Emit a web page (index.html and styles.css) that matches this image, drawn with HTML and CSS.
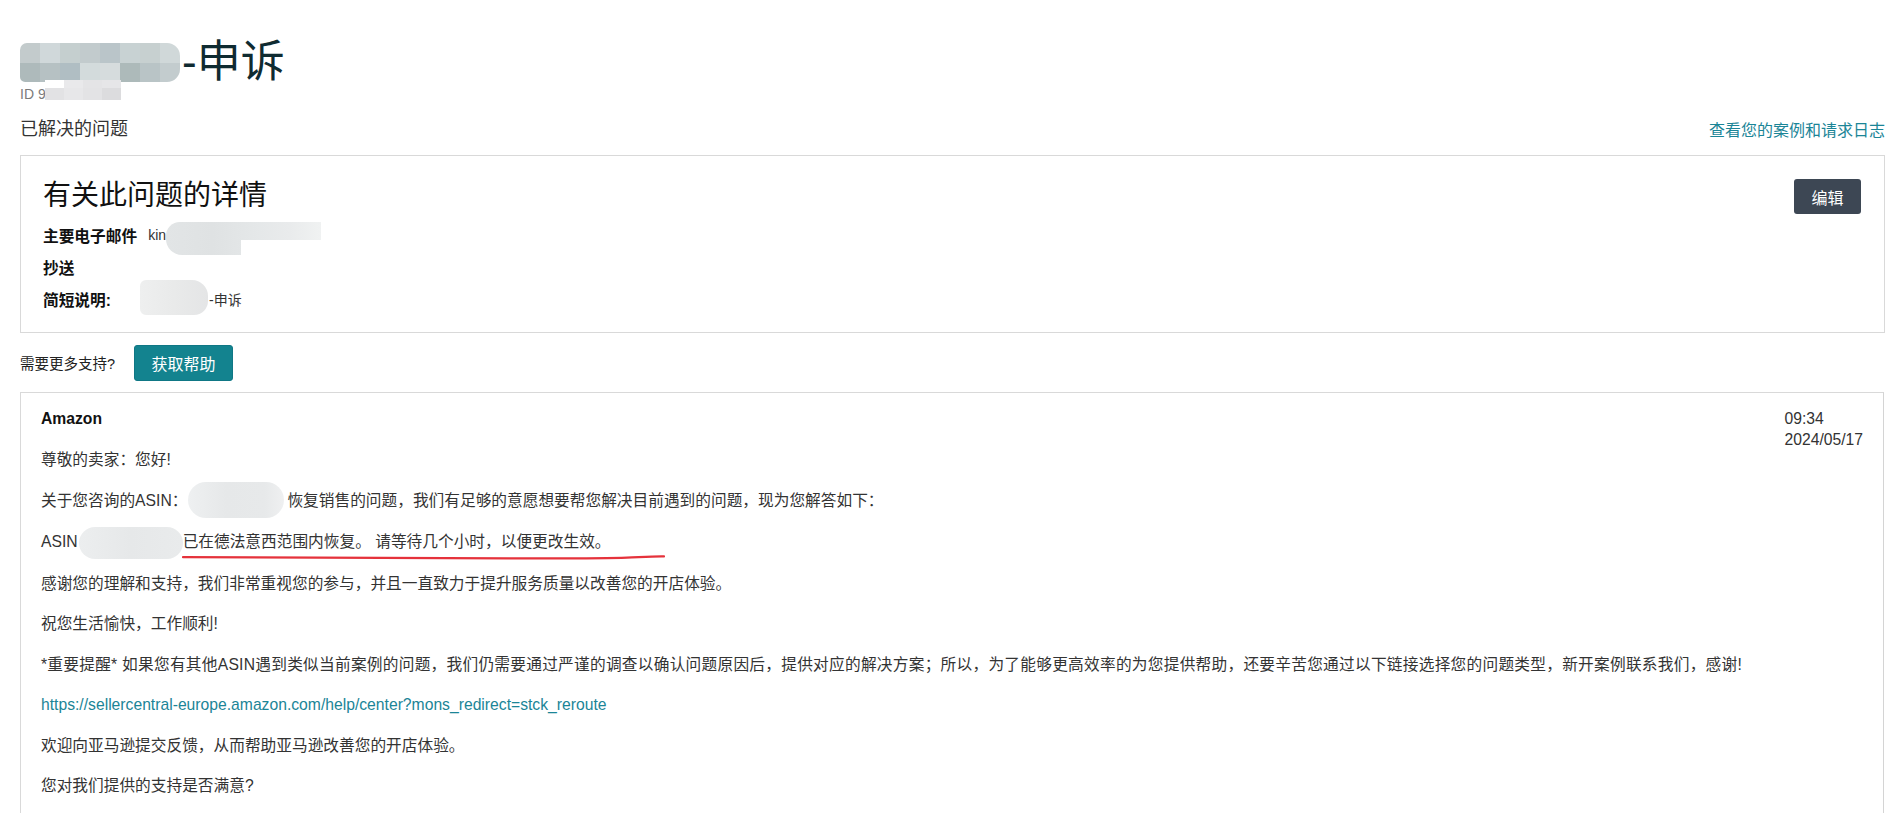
FILE: index.html
```html
<!DOCTYPE html>
<html lang="zh-CN">
<head>
<meta charset="utf-8">
<title>申诉</title>
<link rel="stylesheet" href="styles.css">
</head>
<body>
<div class="page">
  <header class="case-head">
    <h1 class="case-title">
      <span class="pix pix-title"><i></i><i></i><i></i><i></i><i></i><i></i><i></i><i></i><i></i><i></i><i></i><i></i><i></i><i></i><i></i><i></i></span>
      <span class="title-text">-申诉</span>
    </h1>
    <div class="case-id">
      <span>ID 9</span>
      <span class="pix pix-id"><i></i><i></i><i></i><i></i><i></i><i></i><i></i><i></i></span>
    </div>
  </header>

  <div class="status-row">
    <span class="status">已解决的问题</span>
    <a class="log-link" href="#">查看您的案例和请求日志</a>
  </div>

  <section class="details">
    <div class="details-head">
      <h2 class="details-title">有关此问题的详情</h2>
      <button class="edit-btn" type="button">编辑</button>
    </div>
    <div class="details-rows">
      <div class="row">
        <span class="label">主要电子邮件</span>
        <span class="value">kin</span>
        <span class="blur blur-email"></span>
      </div>
      <div class="row">
        <span class="label">抄送</span>
      </div>
      <div class="row">
        <span class="label">简短说明:</span>
        <span class="blur blur-desc"></span>
        <span class="value value-tight">-申诉</span>
      </div>
    </div>
  </section>

  <div class="help-row">
    <span class="help-text">需要更多支持?</span>
    <button class="help-btn" type="button">获取帮助</button>
  </div>

  <section class="message">
    <div class="msg-head">
      <span class="sender">Amazon</span>
      <div class="msg-date">
        <div>09:34</div>
        <div>2024/05/17</div>
      </div>
    </div>
    <p>尊敬的卖家：您好!</p>
    <p>关于您咨询的ASIN：<span class="blur blur-asin1"></span>恢复销售的问题，我们有足够的意愿想要帮您解决目前遇到的问题，现为您解答如下：</p>
    <p class="asin-line">ASIN<span class="blur blur-asin2"></span>已在德法意西范围内恢复。 请等待几个小时，以便更改生效。<svg class="scribble" viewBox="0 0 484 8" width="484" height="8" aria-hidden="true"><path d="M1 4.2 C 80 5.2, 200 5.6, 330 5.4 C 380 5.3, 420 5.6, 445 4.6 C 460 4, 472 3.2, 482 3.4" fill="none" stroke="#e5323b" stroke-width="2.2" stroke-linecap="round"/></svg></p>
    <p>感谢您的理解和支持，我们非常重视您的参与，并且一直致力于提升服务质量以改善您的开店体验。</p>
    <p>祝您生活愉快，工作顺利!</p>
    <p class="notice">*重要提醒* 如果您有其他ASIN遇到类似当前案例的问题，我们仍需要通过严谨的调查以确认问题原因后，提供对应的解决方案；所以，为了能够更高效率的为您提供帮助，还要辛苦您通过以下链接选择您的问题类型，新开案例联系我们，感谢!</p>
    <p><a class="msg-link" href="#">https://sellercentral-europe.amazon.com/help/center?mons_redirect=stck_reroute</a></p>
    <p>欢迎向亚马逊提交反馈，从而帮助亚马逊改善您的开店体验。</p>
    <p>您对我们提供的支持是否满意?</p>
  </section>
</div>
</body>
</html>
```

FILE: styles.css
```css
* { box-sizing: border-box; }

html, body { background: #fff; }

body {
  margin: 0;
  font-family: "Liberation Sans", "Noto Sans CJK SC", sans-serif;
  color: #333;
}

.page {
  padding: 0 12px 0 20px;
}

/* ---------- header ---------- */
.case-title {
  margin: 38px 0 0;
  height: 48px;
  display: flex;
  align-items: center;
  font-size: 44px;
  line-height: 48px;
  font-weight: 400;
  color: #0f2b31;
}

.pix { display: inline-grid; }
.pix i { display: block; }

.pix-title {
  grid-template-columns: repeat(8, 20px);
  grid-template-rows: 20px 19px;
  width: 160px;
  height: 39px;
  border-radius: 7px 13px 13px 5px;
  overflow: hidden;
  margin-right: 2px;
}
.pix-title i:nth-child(1)  { background: #c3cbcc; }
.pix-title i:nth-child(2)  { background: #d0d8da; }
.pix-title i:nth-child(3)  { background: #c5cfcf; }
.pix-title i:nth-child(4)  { background: #c2cbcd; }
.pix-title i:nth-child(5)  { background: #bac5c9; }
.pix-title i:nth-child(6)  { background: #c8d2d3; }
.pix-title i:nth-child(7)  { background: #c7d0d0; }
.pix-title i:nth-child(8)  { background: #d0d8d9; }
.pix-title i:nth-child(9)  { background: #aebabb; }
.pix-title i:nth-child(10) { background: #b6c1c3; }
.pix-title i:nth-child(11) { background: #b0bec3; }
.pix-title i:nth-child(12) { background: #d3dbdc; }
.pix-title i:nth-child(13) { background: #d6dcdd; }
.pix-title i:nth-child(14) { background: #adbaba; }
.pix-title i:nth-child(15) { background: #b9c4c6; }
.pix-title i:nth-child(16) { background: #c3ccce; }

.title-text { white-space: nowrap; }

.case-id {
  display: flex;
  align-items: flex-start;
  font-size: 14px;
  line-height: 16px;
  color: #7a7a7a;
}

.pix-id {
  grid-template-columns: repeat(4, 19px);
  grid-template-rows: 8px 12px;
  width: 76px;
  height: 20px;
  margin-top: -6px;
  margin-left: -1px;
}
.pix-id i:nth-child(1) { background: #ffffff; }
.pix-id i:nth-child(2) { background: #e9e9eb; }
.pix-id i:nth-child(3) { background: #e4e4e6; }
.pix-id i:nth-child(4) { background: #e6e6e8; }
.pix-id i:nth-child(5) { background: #e2e2e4; }
.pix-id i:nth-child(6) { background: #e7e7e9; }
.pix-id i:nth-child(7) { background: #e3e3e5; }
.pix-id i:nth-child(8) { background: #dcdcde; }

/* ---------- status ---------- */
.status-row {
  margin-top: 15px;
  height: 24px;
  display: flex;
  justify-content: space-between;
  align-items: center;
}

.status {
  font-size: 18px;
  line-height: 24px;
  color: #333;
}

.log-link {
  font-size: 16px;
  line-height: 20px;
  margin-top: 3px;
  color: #1b8597;
  text-decoration: none;
}

/* ---------- details card ---------- */
.details {
  margin-top: 14px;
  border: 1px solid #d9d9d9;
  padding: 22px 23px 17px 22px;
}

.details-head {
  display: flex;
  justify-content: space-between;
  align-items: flex-start;
  height: 36px;
}

.details-title {
  margin: 0;
  font-size: 28px;
  line-height: 36px;
  font-weight: 400;
  color: #111;
}

.edit-btn {
  margin-top: 1px;
  width: 67px;
  height: 35px;
  border: 0;
  border-radius: 3px;
  background: #3d4754;
  color: #fff;
  font-family: inherit;
  font-size: 16px;
  padding: 0;
}

.details-rows { margin-top: 5px; }

.row {
  height: 32px;
  display: flex;
  align-items: center;
}

.label {
  font-size: 15.7px;
  font-weight: 700;
  color: #111;
}

.value {
  margin-left: 11px;
  font-size: 14px;
  color: #333;
}

.value-tight { margin-left: 1px; }

.blur { display: inline-block; }

.blur-email {
  width: 155px;
  height: 33px;
  margin-top: 7px;
  border-radius: 14px 0 0 16px;
  background:
    linear-gradient(180deg, rgba(255,255,255,0) 55%, #fff 55%) 75px 0 / 80px 100% no-repeat,
    linear-gradient(90deg, #e2e5e6 0%, #dfe2e3 30%, #e4e7e8 55%, #e9ebec 80%, #f0f2f2 100%);
}

.blur-desc {
  width: 68px;
  height: 35px;
  margin-left: 29px;
  margin-top: -3px;
  border-radius: 6px 16px 14px 6px;
  background: linear-gradient(90deg, #eeefef, #e9eaea 50%, #e4e5e6 100%);
}

/* ---------- help ---------- */
.help-row {
  margin-top: 12px;
  display: flex;
  align-items: center;
  gap: 19px;
}

.help-text {
  font-size: 14.5px;
  color: #222;
  margin-top: -2px;
}

.help-btn {
  width: 99px;
  height: 36px;
  border: 1px solid #0f7785;
  border-radius: 3px;
  background: #13838f;
  color: #fff;
  font-family: inherit;
  font-size: 16px;
  padding: 0;
}

/* ---------- message ---------- */
.message {
  margin-top: 11px;
  border: 1px solid #d9d9d9;
  border-right-color: #d4d4d4;
  border-bottom: 0;
  margin-right: 1px;
  padding: 16px 20px 10px 20px;
  font-size: 15.7px;
}

.msg-head {
  display: flex;
  justify-content: space-between;
  align-items: flex-start;
  line-height: 20.5px;
}

.sender {
  font-weight: 700;
  color: #111;
}

.msg-date { color: #333; }

.message p {
  margin: 0 0 20.6px;
  line-height: 20px;
  white-space: nowrap;
}

.message p.notice { letter-spacing: 0.25px; }

.msg-link {
  color: #1b8597;
  text-decoration: none;
}

.blur-asin1 {
  width: 96px;
  height: 36px;
  margin: -9px 3px -7px 1px;
  vertical-align: middle;
  border-radius: 18px;
  background: linear-gradient(90deg, #eef0f1, #e6e8e9 40%, #e7e9ea 80%, #eff0f1);
}

.blur-asin2 {
  width: 104px;
  height: 32px;
  margin: -6px 0 -6px 1px;
  vertical-align: middle;
  border-radius: 16px;
  background: linear-gradient(90deg, #eceeef, #e6e8e9 50%, #e9ebec);
}

.asin-line { position: relative; }

.scribble {
  position: absolute;
  left: 141px;
  top: 21px;
  overflow: visible;
}
```
